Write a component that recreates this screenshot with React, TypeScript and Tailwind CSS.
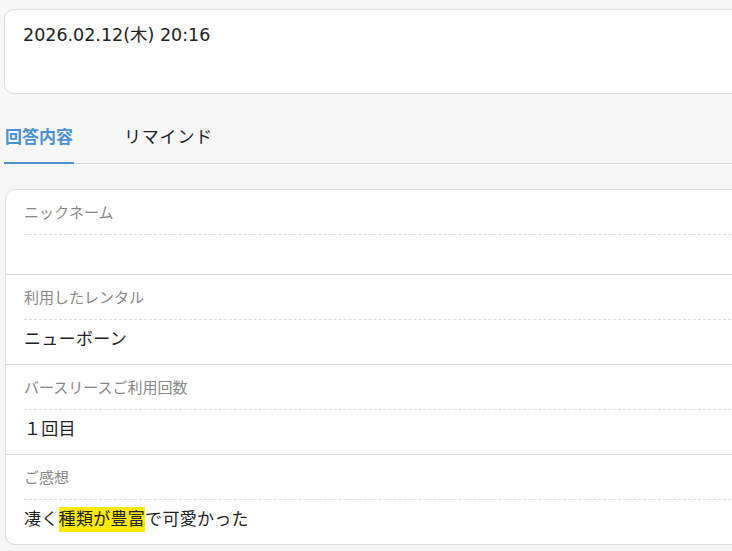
import React from "react";

const font = {
  fontFamily: '"DejaVu Sans", "Noto Sans CJK JP", "Noto Sans", sans-serif',
};

type Answer = {
  label: string;
  value: React.ReactNode;
};

const answers: Answer[] = [
  { label: "ニックネーム", value: "" },
  { label: "利用したレンタル", value: "ニューボーン" },
  { label: "バースリースご利用回数", value: "１回目" },
  {
    label: "ご感想",
    value: (
      <>
        凄く<span className="bg-[#ffea00]">種類が豊富</span>で可愛かった
      </>
    ),
  },
];

const AnswerRow = ({ label, value }: Answer) => (
  <div className="border-t border-[#dddddd] px-[18px] first:border-t-0">
    <div className="flex h-[45px] items-center border-b border-dashed border-[#dddddd] pt-[3px] text-[15px] text-[#888888]">
      {label}
    </div>
    <div
      className={
        value
          ? "flex h-[44px] items-center pb-[5px] text-[17px] tracking-[0.3px] text-[#222222]"
          : "h-[39px]"
      }
    >
      {value}
    </div>
  </div>
);

export default function App() {
  return (
    <div className="min-h-screen w-full overflow-hidden bg-[#f7f7f7]" style={font}>
      <div className="w-[800px] pl-[4px] pt-[9px]">
        {/* date card */}
        <div className="h-[85px] rounded-[10px] border border-[#dddddd] bg-white px-[18px] pt-[12px] text-[17.5px] leading-[26px] text-[#222222]">
          2026.02.12(木) 20:16
        </div>

        {/* tabs */}
        <div className="mt-[26px] flex border-b border-[#dddddd] text-[17px] leading-[26px]">
          <div className="-mb-px border-b-2 border-[#4a90d9] pb-[12px] pl-px pr-px pt-[4px] font-bold text-[#4a90d9]">
            回答内容
          </div>
          <div className="ml-[50px] pb-[12px] pt-[4px] tracking-[0.8px] text-[#222222]">リマインド</div>
        </div>

        {/* answers */}
        <div className="ml-px mt-[25px] rounded-[10px] border border-[#dddddd] bg-white">
          {answers.map((a) => (
            <AnswerRow key={a.label} label={a.label} value={a.value} />
          ))}
        </div>
      </div>
    </div>
  );
}
